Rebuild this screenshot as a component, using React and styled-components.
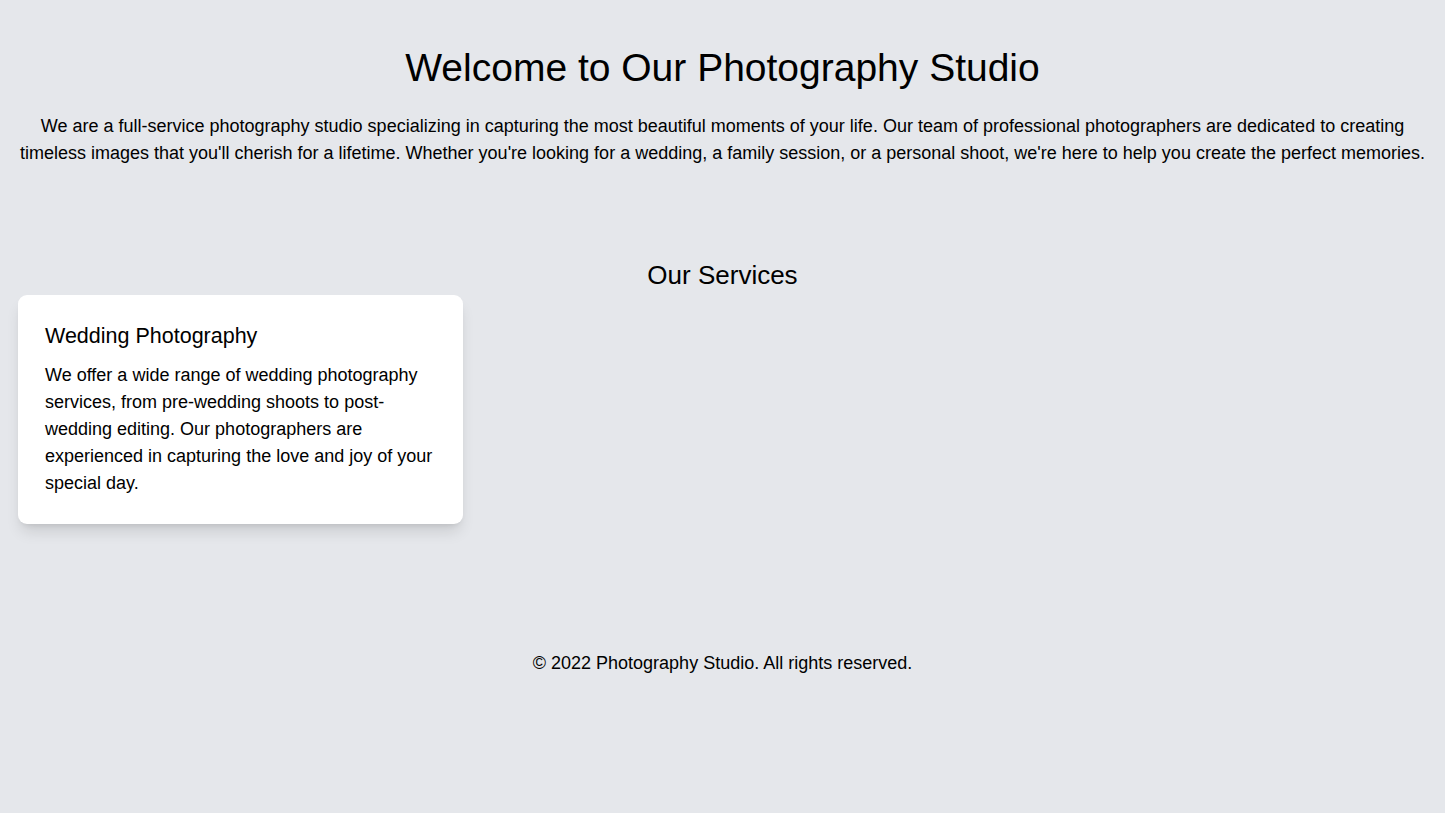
import React from 'react';
import styled, { createGlobalStyle } from 'styled-components';

const GlobalStyle = createGlobalStyle`
  html, body {
    margin: 0;
    padding: 0;
    background: #e5e7eb;
  }
  body {
    font-family: "Liberation Sans Narrow", "Liberation Sans", Arial, sans-serif;
    color: #000;
    font-size: 18px;
    line-height: 1.5;
  }
  * { box-sizing: border-box; }
`;

const Page = styled.div`
  min-height: 813px;
  padding: 0 18px;
`;

const Header = styled.header`
  padding: 44px 0 0;
  text-align: center;
`;

const Title = styled.h1`
  margin: 0 0 21px;
  font-size: 39px;
  font-weight: 400;
  line-height: 48px;
`;

const Intro = styled.p`
  margin: 0;
  font-size: 18px;
  line-height: 27px;
`;

const Services = styled.section`
  padding-top: 88px;
`;

const SectionTitle = styled.h2`
  margin: 0;
  font-size: 26px;
  font-weight: 400;
  line-height: 40px;
  text-align: center;
`;

const Grid = styled.div`
  display: grid;
  grid-template-columns: repeat(3, 445px);
  gap: 37px;
`;

const Card = styled.div`
  background: #fff;
  border-radius: 9px;
  padding: 27px;
  box-shadow: 0 10px 15px -3px rgba(0, 0, 0, 0.12), 0 4px 6px -4px rgba(0, 0, 0, 0.12);
`;

const CardTitle = styled.h3`
  margin: 0 0 12px;
  font-size: 21.5px;
  font-weight: 400;
  line-height: 28px;
`;

const CardText = styled.p`
  margin: 0;
  font-size: 18px;
  line-height: 27px;
`;

const Footer = styled.footer`
  padding-top: 126px;
  text-align: center;
  font-size: 18px;
  line-height: 27px;
`;

export default function App() {
  return (
    <>
      <GlobalStyle />
      <Page>
        <Header>
          <Title>Welcome to Our Photography Studio</Title>
          <Intro>
            We are a full-service photography studio specializing in capturing the most beautiful moments of your life. Our team of professional photographers are dedicated to creating timeless images that you'll cherish for a lifetime. Whether you're looking for a wedding, a family session, or a personal shoot, we're here to help you create the perfect memories.
          </Intro>
        </Header>
        <Services>
          <SectionTitle>Our Services</SectionTitle>
          <Grid>
            <Card>
              <CardTitle>Wedding Photography</CardTitle>
              <CardText>
                We offer a wide range of wedding photography services, from pre-wedding shoots to post-wedding editing. Our photographers are experienced in capturing the love and joy of your special day.
              </CardText>
            </Card>
          </Grid>
        </Services>
        <Footer>© 2022 Photography Studio. All rights reserved.</Footer>
      </Page>
    </>
  );
}
